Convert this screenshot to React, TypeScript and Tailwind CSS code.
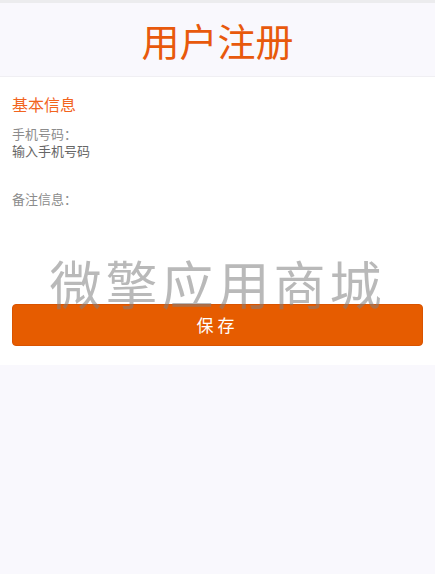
export default function App() {
  return (
    <div
      className="relative min-h-[574px] bg-[#f9f8fd]"
      style={{ fontFamily: '"Noto Sans CJK SC", "Noto Sans", sans-serif' }}
    >
      <div className="h-[3px] bg-[#ececee]" />
      {/* 标题 */}
      <header className="flex h-[74px] items-center justify-center border-b border-[#f0eff3]">
        <h1 className="text-[38px] leading-none text-[#e8590c]">用户注册</h1>
      </header>

      {/* 表单 */}
      <div className="bg-white px-3 pb-[19px] pt-[15px]">
        <h2 className="text-[16px] leading-6 text-[#f2641e]">基本信息</h2>
        <div className="mt-[9px] text-[13px] leading-[17px]">
          <p className="text-[#8c8c8c]">手机号码：</p>
          <p className="text-[#666]">输入手机号码</p>
        </div>
        <p className="mt-[31px] text-[13px] leading-[17px] text-[#8c8c8c]">备注信息：</p>
        <div className="h-[97px]" />
        <button className="flex h-[42px] w-full items-center justify-center rounded-[4px] border border-[#d95300] bg-[#e65c00] text-[17px] tracking-[4px] text-white">
          保存
        </button>
      </div>

      {/* 水印 */}
      <div className="pointer-events-none absolute left-0 right-0 top-[257px] flex justify-center">
        <span className="text-[52px] leading-none tracking-[4px] text-[#808080]/55">微擎应用商城</span>
      </div>
    </div>
  );
}
